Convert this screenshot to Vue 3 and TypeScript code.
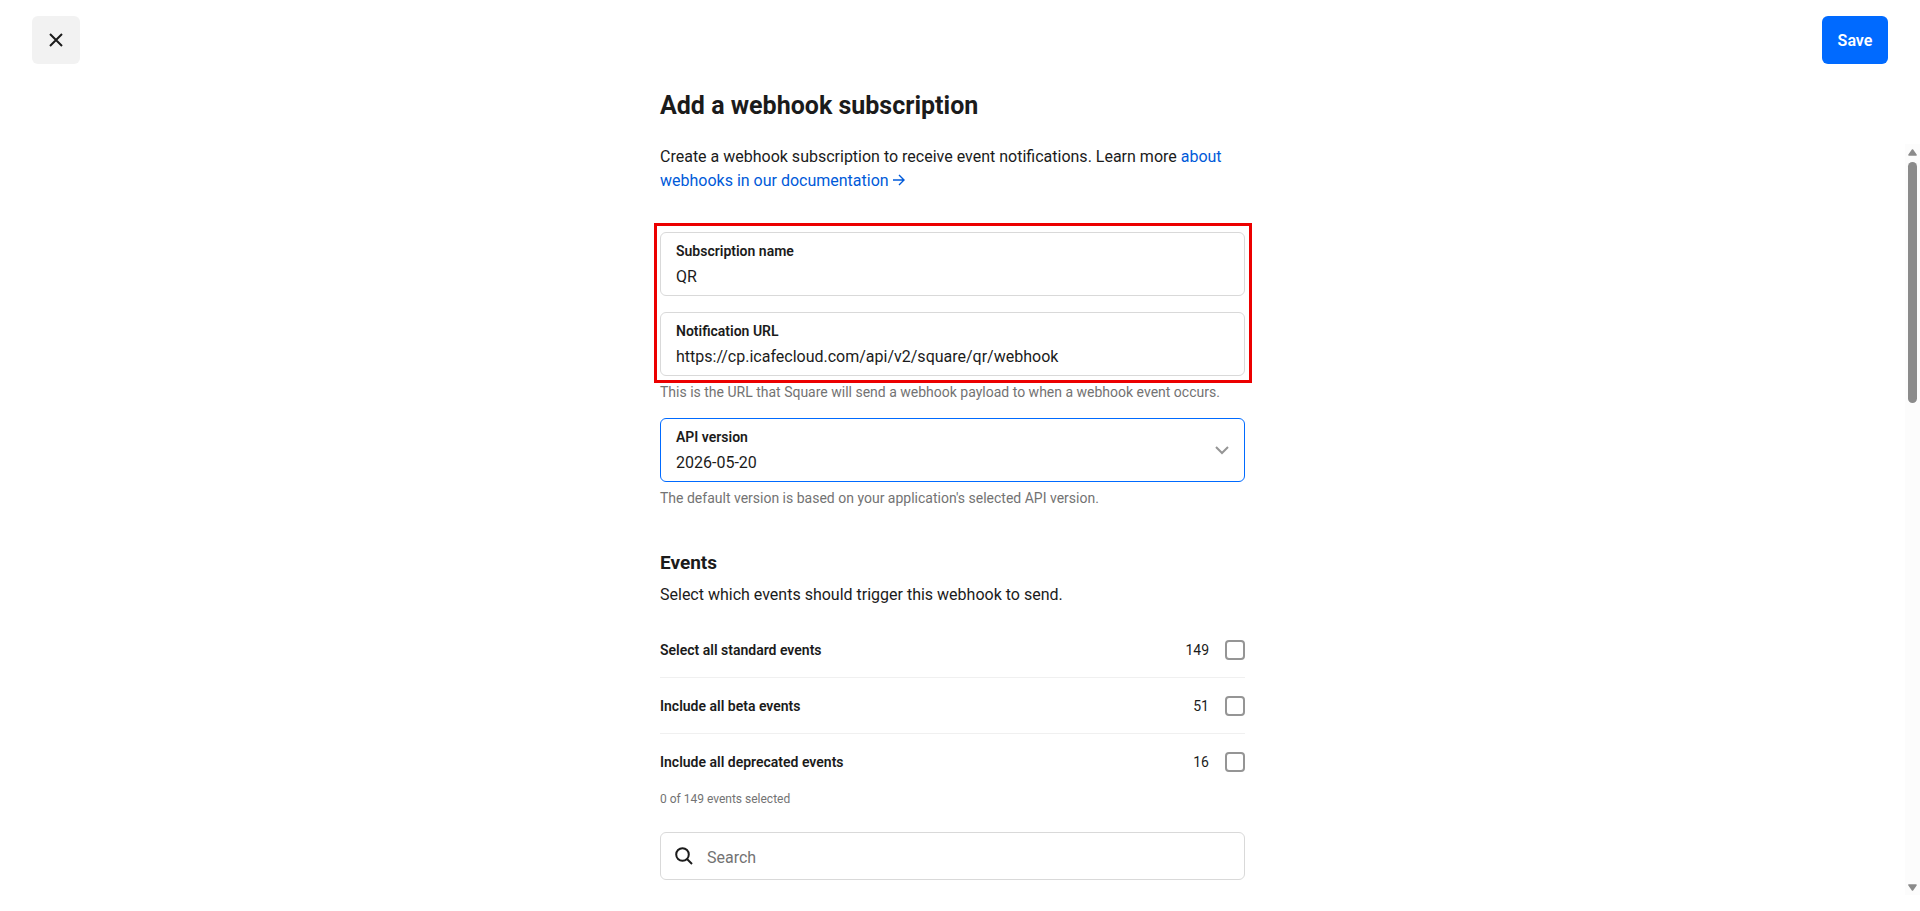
<script setup lang="ts">
import { reactive, ref } from 'vue'

interface EventGroup {
  id: string
  label: string
  count: number
  selected: boolean
}

const subscriptionName = ref('QR')
const notificationUrl = ref('https://cp.icafecloud.com/api/v2/square/qr/webhook')
const apiVersion = ref('2026-05-20')
const search = ref('')

const groups = reactive<EventGroup[]>([
  { id: 'standard', label: 'Select all standard events', count: 149, selected: false },
  { id: 'beta', label: 'Include all beta events', count: 51, selected: false },
  { id: 'deprecated', label: 'Include all deprecated events', count: 16, selected: false },
])
</script>

<template>
  <div class="sheet">
    <header class="toolbar">
      <button class="close" type="button" aria-label="Close">
        <svg width="16" height="16" viewBox="0 0 16 16" aria-hidden="true">
          <path d="M2 2 14 14M14 2 2 14" fill="none" stroke="currentColor" stroke-width="2" />
        </svg>
      </button>
      <button class="save" type="submit" form="webhook-form">Save</button>
    </header>

    <div class="title-bar">
      <h1 class="title">Add a webhook subscription</h1>
    </div>

    <div class="body">
      <main class="scroll-area">
        <form id="webhook-form" class="form" @submit.prevent>
          <p class="intro">
            Create a webhook subscription to receive event notifications. Learn more
            <a class="link" href="#">about webhooks in our documentation<svg class="arrow" width="12" height="12" viewBox="0 0 12 12" aria-hidden="true"><path d="M0 6H11M6 1 11 6 6 11" fill="none" stroke="currentColor" stroke-width="1.4" /></svg></a>
          </p>

          <div class="highlighted">
            <div class="field">
              <label for="subscription-name">Subscription name</label>
              <input id="subscription-name" v-model="subscriptionName" type="text" />
            </div>
            <div class="field">
              <label for="notification-url">Notification URL</label>
              <input id="notification-url" v-model="notificationUrl" type="text" />
            </div>
          </div>
          <p class="hint">This is the URL that Square will send a webhook payload to when a webhook event occurs.</p>

          <div class="field field-select">
            <label for="api-version">API version</label>
            <select id="api-version" v-model="apiVersion">
              <option>2026-05-20</option>
            </select>
            <svg class="chevron" width="14" height="9" viewBox="0 0 14 9" aria-hidden="true">
              <path d="M1 1 7 7 13 1" fill="none" stroke="currentColor" stroke-width="2" />
            </svg>
          </div>
          <p class="hint">The default version is based on your application's selected API version.</p>

          <section class="events">
            <h2 class="subtitle">Events</h2>
            <p class="description">Select which events should trigger this webhook to send.</p>

            <ul class="groups">
              <li v-for="group in groups" :key="group.id">
                <label class="group" :for="group.id">
                  <span class="group-label">{{ group.label }}</span>
                  <span class="group-count">{{ group.count }}</span>
                  <input :id="group.id" v-model="group.selected" type="checkbox" />
                </label>
              </li>
            </ul>
            <p class="selected-count">0 of 149 events selected</p>

            <div class="search">
              <svg width="18" height="18" viewBox="0 0 18 18" aria-hidden="true">
                <circle cx="7.5" cy="7.5" r="6.3" fill="none" stroke="currentColor" stroke-width="2" />
                <path d="M12 12 17 17" fill="none" stroke="currentColor" stroke-width="2" />
              </svg>
              <input v-model="search" type="search" placeholder="Search" aria-label="Search" />
            </div>
          </section>
        </form>
      </main>

      <div class="scrollbar" aria-hidden="true">
        <svg width="9" height="7" viewBox="0 0 9 7">
          <path d="M4.5 1 8 6H1Z" fill="currentColor" stroke="currentColor" stroke-width="1.6" stroke-linejoin="round" />
        </svg>
        <div class="rail"><div class="thumb"></div></div>
        <svg width="9" height="7" viewBox="0 0 9 7">
          <path d="M4.5 6 1 1H8Z" fill="currentColor" stroke="currentColor" stroke-width="1.6" stroke-linejoin="round" />
        </svg>
      </div>
    </div>
  </div>
</template>

<style>
body {
  background: #fff;
}
</style>

<style scoped>
.sheet {
  display: flex;
  flex-direction: column;
  box-sizing: border-box;
  height: 100vh;
  padding-bottom: 16px;
  color: #1b1b1b;
  font-family: Roboto, "Liberation Sans", Arial, sans-serif;
  font-size: 16px;
  line-height: 24px;
}

h1,
h2,
p,
ul {
  margin: 0;
  padding: 0;
}

button,
input,
select {
  box-sizing: border-box;
  margin: 0;
  color: inherit;
  font: inherit;
}

.toolbar {
  display: flex;
  justify-content: space-between;
  padding: 16px 32px;
}

.close,
.save {
  display: flex;
  align-items: center;
  justify-content: center;
  height: 48px;
  border: 0;
  border-radius: 6px;
  cursor: pointer;
}

.close {
  width: 48px;
  padding: 0;
  background: #f2f2f2;
}

.save {
  min-width: 66px;
  padding: 2px 15px 0;
  background: #006aff;
  color: #fff;
  font-weight: 600;
}

/* The right padding equals the scrollbar's width, so title and form share one axis. */
.title-bar {
  padding: 10px 15px 22px 0;
}

.title,
.form {
  max-width: 585px;
  margin: 0 auto;
}

.title {
  font-size: 25px;
  font-weight: 700;
  line-height: 32px;
}

.body {
  display: flex;
  flex: 1;
  min-height: 0;
}

.scroll-area {
  flex: 1;
  overflow-y: auto;
  scrollbar-width: none;
}

.intro {
  padding-top: 1px;
}

.link {
  color: #005ad9;
  text-decoration: none;
}

.arrow {
  margin-left: 4px;
}

.highlighted {
  position: relative;
  display: grid;
  gap: 16px;
  margin-top: 39px;
}

.highlighted::after {
  position: absolute;
  inset: -9px -7px -7px -6px;
  border: 3px solid #ec0000;
  pointer-events: none;
  content: "";
}

.field {
  display: flex;
  flex-direction: column;
  gap: 3px;
  padding: 7px 15px 6px;
  border: 1px solid #d9d9d9;
  border-radius: 6px;
}

.field label {
  font-size: 14px;
  font-weight: 600;
  line-height: 22px;
}

.field input,
.field select {
  width: 100%;
  height: 24px;
  padding: 0;
  border: 0;
  outline: 0;
  background: transparent;
  appearance: none;
}

.field-select {
  position: relative;
  margin-top: 14px;
  border-color: #006aff;
}

.chevron {
  position: absolute;
  top: 50%;
  right: 15px;
  margin-top: -4px;
  color: #959595;
  pointer-events: none;
}

.hint {
  margin-top: 4px;
  color: #737373;
  font-size: 14px;
}

.events {
  margin-top: 41px;
}

.subtitle {
  font-size: 19px;
  font-weight: 700;
}

.description {
  margin-top: 8px;
}

.groups {
  margin-top: 15px;
  list-style: none;
}

.group {
  display: flex;
  align-items: center;
  gap: 16px;
  box-sizing: border-box;
  height: 56px;
  border-bottom: 1px solid #f0f0f0;
  font-size: 14px;
}

li:last-child .group {
  border-color: transparent;
}

.group-label {
  flex: 1;
  font-weight: 600;
}

.group input {
  width: 20px;
  height: 20px;
  border: 2px solid #959595;
  border-radius: 4px;
  background: #fff;
  appearance: none;
}

.group input:checked {
  border-color: #006aff;
  background: #006aff;
}

.selected-count {
  color: #737373;
  font-size: 12px;
  line-height: 18px;
}

.search {
  display: flex;
  align-items: center;
  gap: 14px;
  box-sizing: border-box;
  height: 48px;
  margin-top: 24px;
  padding: 0 14px;
  border: 1px solid #d9d9d9;
  border-radius: 6px;
}

.search input {
  flex: 1;
  min-width: 0;
  height: 26px;
  padding: 2px 0 0;
  border: 0;
  outline: 0;
  background: transparent;
  appearance: none;
}

.search input::placeholder {
  color: #737373;
  opacity: 1;
}

.scrollbar {
  display: flex;
  flex-direction: column;
  align-items: center;
  gap: 6px;
  box-sizing: border-box;
  width: 15px;
  padding: 5px 0 4px;
  background: #fcfcfc;
  color: #8b8b8b;
}

.rail {
  flex: 1;
}

.thumb {
  width: 9px;
  height: 241px;
  border-radius: 5px;
  background: #8b8b8b;
}
</style>
